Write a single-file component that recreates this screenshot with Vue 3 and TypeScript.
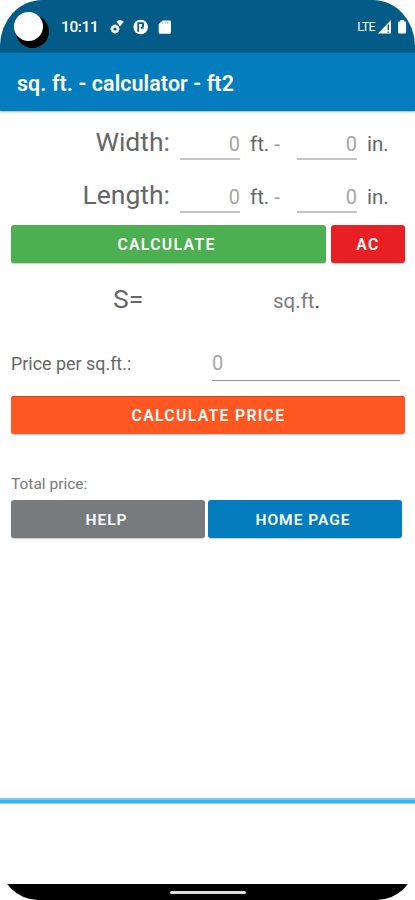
<script setup lang="ts">
import { ref } from 'vue'

interface Dimension {
  label: string
  feet: string
  inches: string
}

const dimensions = ref<Dimension[]>([
  { label: 'Width:', feet: '', inches: '' },
  { label: 'Length:', feet: '', inches: '' },
])
const price = ref('')
</script>

<template>
  <div class="phone">
    <header class="status">
      <span class="camera"></span>
      <span class="time">10:11</span>
      <svg class="notifications" width="64" height="18" viewBox="0 0 64 18">
        <g fill="none" stroke="#fff">
          <circle cx="6" cy="11" r="2.9" stroke-width="2.4" />
          <path d="M6 6.2v9.6M1.2 11h9.6M2.8 7.8l6.4 6.4M9.2 7.8l-6.4 6.4" stroke-width="1.1" />
        </g>
        <circle cx="6" cy="11" r="1.5" fill="#035b88" />
        <path d="M7.4 3.6Q11 1 14.9 3.6L11 8.6z" fill="#fff" />
        <circle cx="31.7" cy="9" r="7.3" fill="#fff" />
        <path d="M29.2 13.8V5.2h4.6v4.6h-2" fill="none" stroke="#035b88" stroke-width="1.7" />
        <path d="M34 5.5v3" stroke="#035b88" stroke-width="2" />
        <path d="M53.5 2.5h7.2q1.3 0 1.3 1.3v10.8q0 1.2-1.2 1.2H50.9q-1.2 0-1.2-1.2V6.3z" fill="#fff" />
        <path d="M53.7 4v2M56.2 4v2M58.7 4v2" stroke="#8db6ce" stroke-width=".8" />
      </svg>
      <span class="lte">LTE</span>
      <svg class="device" width="32" height="18" viewBox="0 0 32 18">
        <path d="M0 15.4 13 2v13.4z" fill="#fff" />
        <path d="M10.3 6.5v5.7M10.3 13.4v1.4" stroke="#174f83" stroke-width="1.4" />
        <path d="M22.3 2h3.6v1.6h1.2q1 0 1 1v10q0 1-1 1h-6q-1 0-1-1v-10q0-1 1-1h1.2z" fill="#fff" />
      </svg>
    </header>

    <div class="appbar"><h1>sq. ft. - calculator - ft2</h1></div>

    <main class="content">
      <div v-for="d in dimensions" :key="d.label" class="dimension">
        <label class="name">{{ d.label }}</label>
        <input v-model="d.feet" class="field" placeholder="0" />
        <span class="unit feet">ft. <i>-</i></span>
        <input v-model="d.inches" class="field" placeholder="0" />
        <span class="unit">in.</span>
      </div>

      <div class="actions">
        <button class="btn calculate">CALCULATE</button>
        <button class="btn clear">AC</button>
      </div>

      <div class="result">
        <span class="area">S=</span>
        <span class="square">sq.ft<b>.</b></span>
      </div>

      <div class="pricing">
        <label>Price per sq.ft.:</label>
        <input v-model="price" class="field wide" placeholder="0" />
      </div>
      <button class="btn total-btn">CALCULATE PRICE</button>

      <p class="total">Total price:</p>
      <div class="links">
        <button class="btn help">HELP</button>
        <button class="btn home">HOME PAGE</button>
      </div>
    </main>

    <div class="divider"></div>
    <footer class="nav"><span></span></footer>
  </div>
</template>

<style>
body {
  background: #fff;
}
</style>

<style scoped>
.phone {
  box-sizing: border-box;
  width: 415px;
  height: 900px;
  display: flex;
  flex-direction: column;
  overflow: hidden;
  border-radius: 42px 42px 38px 38px / 46px 46px 38px 38px;
  background: #fff;
  font-family: Roboto, sans-serif;
  color: #666;
}
.status {
  height: 53px;
  flex: none;
  display: flex;
  align-items: center;
  background: #035b88;
  color: #fff;
}
.camera {
  width: 29px;
  height: 29px;
  margin-left: 14px;
  border-radius: 50%;
  background: #fff;
  box-shadow: 4px 5px 0 2px #000;
}
.time {
  width: 48px;
  margin-left: 18px;
  padding-top: 1px;
  font-size: 15.5px;
  font-weight: 500;
  letter-spacing: -0.4px;
}
.lte {
  margin-left: auto;
  font-size: 12.5px;
  letter-spacing: -0.6px;
}
.device {
  margin-left: 3px;
  margin-right: 5px;
}
.appbar {
  height: 58px;
  flex: none;
  display: flex;
  align-items: center;
  padding: 3px 17px 0;
  box-sizing: border-box;
  background: #037dbd;
  box-shadow: 0 1px 2px #9bb4cc;
}
h1 {
  margin: 0;
  font-size: 21.4px;
  font-weight: 600;
  letter-spacing: 0.1px;
  color: #fff;
}
.content {
  height: 687px;
  flex: none;
  padding: 7px 10px 0 11px;
  box-sizing: border-box;
}
.dimension {
  height: 53px;
  display: flex;
  align-items: baseline;
}
.name {
  width: 159px;
  margin-right: 10px;
  text-align: right;
  font-size: 26.5px;
  line-height: 48px;
}
.field {
  box-sizing: border-box;
  width: 60px;
  height: 29px;
  padding: 1px 0 0;
  border: 0;
  border-bottom: 2px solid #c4c4c4;
  border-radius: 0;
  outline: 0;
  background: transparent;
  font: 20px Roboto, sans-serif;
  text-align: right;
}
.dimension .field {
  height: 29px;
  padding: 0 0 1px;
}
.field::placeholder {
  color: #a6a6a6;
  opacity: 1;
}
.unit {
  padding-left: 10px;
  font-size: 20.5px;
}
.feet {
  width: 47px;
}
.feet i {
  font-style: normal;
  color: #999;
}
.actions {
  display: flex;
  gap: 5px;
  margin-top: 1px;
}
.btn {
  height: 38px;
  padding: 0;
  border: 0;
  border-radius: 3px;
  color: #fff;
  font: 600 15.8px Roboto, sans-serif;
  letter-spacing: 1.3px;
  box-shadow: 0 1px 1px #0003;
}
.calculate {
  width: 315px;
  padding-right: 4px;
  background: #4caf50;
}
.clear {
  width: 74px;
  background: #e92023;
}
.result {
  display: flex;
  align-items: baseline;
  height: 71px;
  margin-top: 12px;
  padding-left: 102px;
  line-height: 48px;
}
.area {
  width: 160px;
  font-size: 26.5px;
}
.square {
  font-size: 20.5px;
  color: #7c7c7c;
}
.square b {
  font-weight: 400;
  color: #333;
}
.pricing {
  display: flex;
  align-items: baseline;
  height: 50px;
}
.pricing label {
  width: 201px;
  font-size: 17.9px;
  line-height: 36px;
}
.wide {
  width: 188px;
  height: 31px;
  padding: 0 0 4px;
  border-bottom: 1px solid #939393;
  text-align: left;
}
.total-btn {
  display: block;
  width: 394px;
  padding-left: 1px;
  background: #ff5722;
  box-shadow: inset 0 1px 0 #f13b14, 0 1px 1px #0003;
}
.total {
  margin: 40px 0 6px;
  font-size: 15.5px;
  line-height: 20px;
  color: #777;
}
.links {
  display: flex;
  gap: 3px;
}
.help,
.home {
  width: 194px;
  padding-top: 1px;
  font-size: 15.5px;
  letter-spacing: 1px;
}
.help {
  padding-right: 3px;
  background: #777b7d;
}
.home {
  padding-right: 4px;
  background: #037dbd;
}
.divider {
  height: 6px;
  flex: none;
  box-sizing: border-box;
  border-top: 2px solid #75c9f4;
  border-bottom: 1px solid #91d6f7;
  background: #35b1ee;
}
.nav {
  display: flex;
  justify-content: center;
  height: 16px;
  margin-top: auto;
  background: #000;
}
.nav span {
  width: 76px;
  height: 3px;
  margin-top: 7px;
  border-radius: 2px;
  background: #ddd;
}
</style>
